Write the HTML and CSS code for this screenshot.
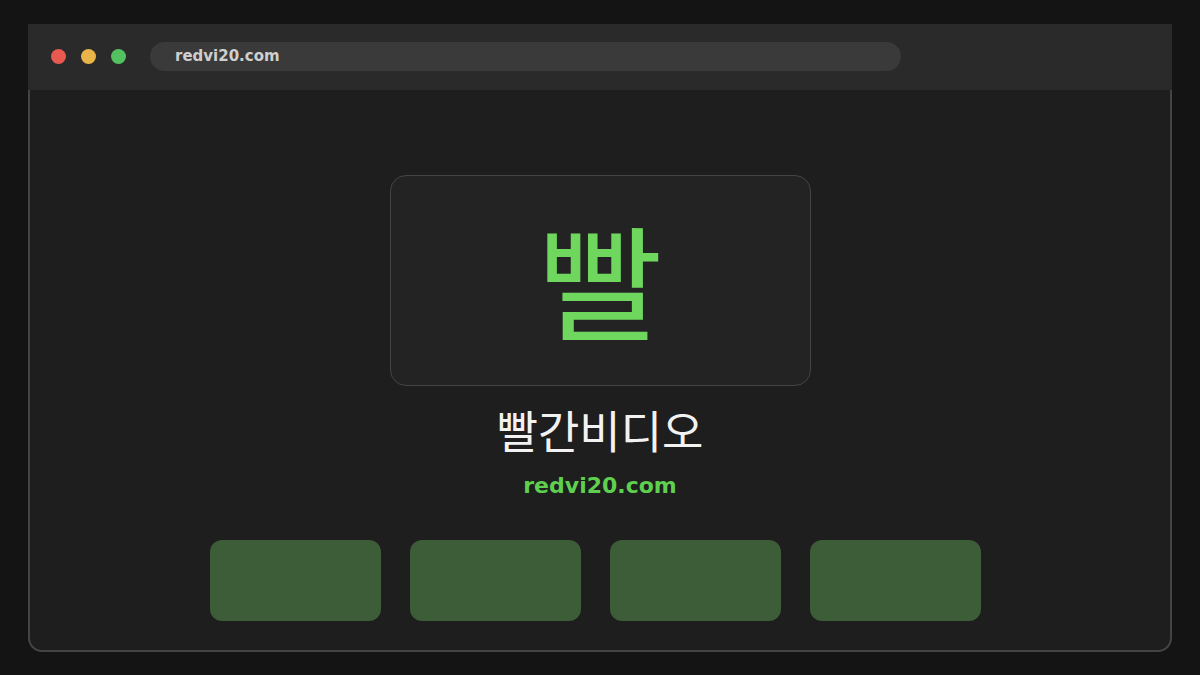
FILE: index.html
```html
<!DOCTYPE html>
<html lang="ko">
<head>
<meta charset="utf-8">
<title>redvi20.com</title>
<link rel="stylesheet" href="styles.css">
</head>
<body>
<div class="window">
  <div class="topbar">
    <div class="lights">
      <span class="light red"></span>
      <span class="light yellow"></span>
      <span class="light green"></span>
    </div>
    <div class="address">redvi20.com</div>
  </div>
  <div class="content">
    <div class="logo-card"><span class="logo-char">빨</span></div>
    <h1 class="title">빨간비디오</h1>
    <div class="domain">redvi20.com</div>
    <div class="buttons">
      <div class="btn"></div>
      <div class="btn"></div>
      <div class="btn"></div>
      <div class="btn"></div>
    </div>
  </div>
</div>
</body>
</html>
```

FILE: styles.css
```css
html, body {
  margin: 0;
  padding: 0;
  background: #141414;
  width: 1200px;
  height: 675px;
  overflow: hidden;
}
body {
  padding: 24px 28px 0 28px;
  box-sizing: border-box;
  font-family: "DejaVu Sans", "Noto Sans CJK KR", sans-serif;
}
.window {
  width: 1144px;
  display: flex;
  flex-direction: column;
}
.topbar {
  height: 66px;
  background: #2a2a2a;
  display: flex;
  align-items: center;
  padding-left: 23px;
  padding-bottom: 1px;
  box-sizing: border-box;
}
.lights {
  display: flex;
  gap: 15px;
}
.light {
  width: 15px;
  height: 15px;
  border-radius: 50%;
  display: block;
}
.red { background: #e8594f; }
.yellow { background: #e9b548; }
.green { background: #54c160; }
.address {
  margin-left: 24px;
  width: 751px;
  height: 29px;
  border-radius: 15px;
  background: #3a3a3a;
  color: #cfcfcf;
  font-weight: bold;
  font-size: 15px;
  line-height: 29px;
  padding-left: 25px;
  box-sizing: border-box;
}
.content {
  height: 562px;
  box-sizing: border-box;
  background: #1e1e1e;
  border: 2px solid #444;
  border-top: none;
  border-radius: 0 0 14px 14px;
  display: flex;
  flex-direction: column;
  align-items: center;
  padding-top: 85px;
}
.logo-card {
  width: 421px;
  height: 211px;
  box-sizing: border-box;
  border: 1px solid #444;
  border-radius: 16px;
  background: #232323;
  display: flex;
  align-items: center;
  justify-content: center;
}
.logo-char {
  display: inline-block;
  font-family: "Noto Sans CJK KR", sans-serif;
  font-size: 124px;
  font-weight: 400;
  color: #6fd65e;
  line-height: 1;
  margin-top: -8px;
  transform: scaleX(1.1);
}
.title {
  margin: 18px 0 0 0;
  font-family: "Noto Sans CJK KR", sans-serif;
  font-weight: 400;
  font-size: 45px;
  line-height: 52px;
  color: #f2f2f2;
}
.domain {
  margin-top: 17px;
  font-weight: bold;
  font-size: 22px;
  line-height: 26px;
  color: #5fcf4f;
}
.buttons {
  margin-top: 41px;
  display: flex;
  gap: 29px;
  padding-right: 9px;
}
.btn {
  width: 171px;
  height: 81px;
  border-radius: 12px;
  background: #3d5c38;
}
```
